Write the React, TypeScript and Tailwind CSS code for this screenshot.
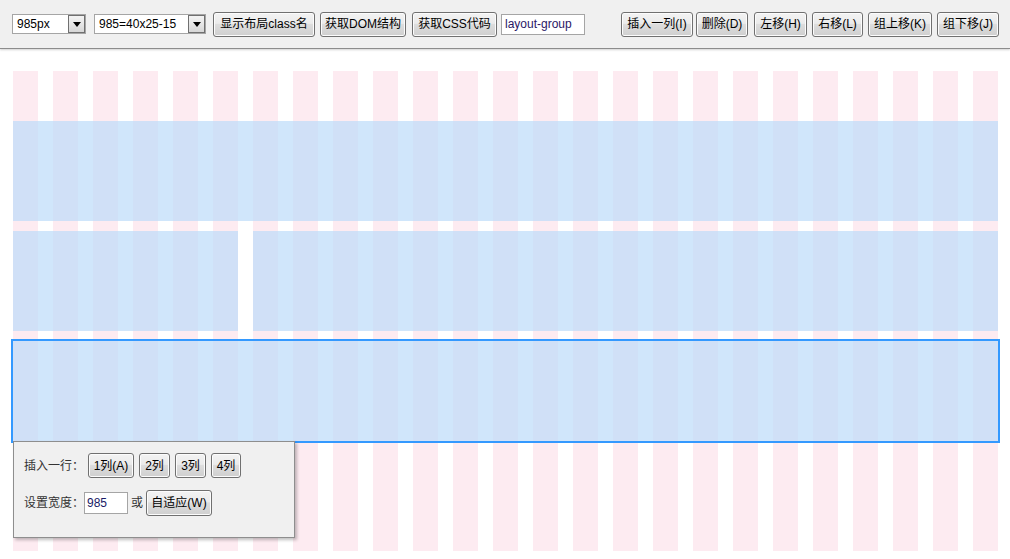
import type { ReactNode } from "react";

function Btn({ children, className = "" }: { children: ReactNode; className?: string }) {
  return (
    <button
      className={`h-[25px] shrink-0 whitespace-nowrap rounded-[3px] border border-[#707070] bg-[linear-gradient(#f3f3f3,#ebebeb_45%,#dddddd_50%,#cfcfcf)] text-[12px] leading-none text-black shadow-[inset_0_0_0_1px_#fcfcfc] ${className}`}
    >
      {children}
    </button>
  );
}

function FakeSelect({ value, className = "" }: { value: string; className?: string }) {
  return (
    <div
      className={`flex h-[20px] shrink-0 items-center justify-between border border-[#a5a5a5] bg-white pl-[4px] text-[12px] text-black ${className}`}
    >
      <span>{value}</span>
      <span className="flex h-[18px] w-[17px] items-center justify-center border border-[#707070] bg-[linear-gradient(#f3f3f3,#e6e6e6_50%,#d6d6d6)]">
        <svg width="8" height="5" viewBox="0 0 8 5">
          <path d="M0 0h8L4 5z" fill="#000" />
        </svg>
      </span>
    </div>
  );
}

function Toolbar() {
  return (
    <div className="flex h-[49px] items-center justify-between border-b border-[#8c8c8c] bg-[#f0f0f0] pl-[12px] pr-[11px] shadow-[0_1px_2px_rgba(0,0,0,0.18)]">
      <div className="flex items-center">
        <FakeSelect value="985px" className="w-[74px]" />
        <FakeSelect value="985=40x25-15" className="ml-[8px] w-[112px]" />
        <Btn className="ml-[7px] w-[102px]">显示布局class名</Btn>
        <Btn className="ml-[5px] w-[86px]">获取DOM结构</Btn>
        <Btn className="ml-[6px] w-[85px]">获取CSS代码</Btn>
        <input
          readOnly
          value="layout-group"
          className="ml-[4px] h-[21px] w-[84px] border border-[#a5a5a5] bg-white pl-[3px] text-[12px] text-[#2a1866] outline-none"
        />
      </div>
      <div className="flex items-center">
        <Btn className="w-[72px]">插入一列(I)</Btn>
        <Btn className="ml-[3px] w-[52px]">删除(D)</Btn>
        <Btn className="ml-[6px] w-[53px]">左移(H)</Btn>
        <Btn className="ml-[5px] w-[51px]">右移(L)</Btn>
        <Btn className="ml-[5px] w-[64px]">组上移(K)</Btn>
        <Btn className="ml-[5px] w-[62px]">组下移(J)</Btn>
      </div>
    </div>
  );
}

function Popup() {
  return (
    <div className="absolute left-0 top-full z-10 h-[97px] w-[282px] border border-[#8e8e8e] bg-[#f0f0f0] pl-[10px] pt-[11px] text-[12px] text-[#333] shadow-[2px_2px_3px_rgba(0,0,0,0.25)]">
      <div className="flex items-center">
        <span className="w-[64px]">插入一行：</span>
        <Btn className="w-[46px]">1列(A)</Btn>
        <Btn className="ml-[5px] w-[31px]">2列</Btn>
        <Btn className="ml-[5px] w-[31px]">3列</Btn>
        <Btn className="ml-[5px] w-[30px]">4列</Btn>
      </div>
      <div className="mt-[12px] flex items-center">
        <span className="w-[60px]">设置宽度：</span>
        <input
          readOnly
          value="985"
          className="h-[22px] w-[44px] border border-[#a5a5a5] bg-white pl-[2px] text-[12px] text-[#1a1a66] outline-none"
        />
        <span className="ml-[3px]">或</span>
        <Btn className="ml-[3px] h-[26px] w-[66px]">自适应(W)</Btn>
      </div>
    </div>
  );
}

export default function App() {
  return (
    <div className="relative h-[559px] w-[1010px] overflow-hidden bg-white font-['Liberation_Sans','Noto_Sans_CJK_SC',sans-serif]">
      <Toolbar />
      {/* 25 columns of 25px with 15px gutters */}
      <div className="ml-[13px] mt-[22px] flex h-[480px] w-[985px] flex-col gap-[10px] bg-[repeating-linear-gradient(90deg,#fdebf1_0px,#fdebf1_25px,transparent_25px,transparent_40px)] pt-[50px]">
        <div className="h-[100px] bg-[rgba(188,219,249,0.7)]" />
        <div className="flex h-[100px] gap-[15px]">
          <div className="w-[225px] bg-[rgba(188,219,249,0.7)]" />
          <div className="flex-1 bg-[rgba(188,219,249,0.7)]" />
        </div>
        <div className="relative h-[100px] bg-[rgba(188,219,249,0.7)] ring-2 ring-[#3399ff]">
          <Popup />
        </div>
      </div>
    </div>
  );
}
